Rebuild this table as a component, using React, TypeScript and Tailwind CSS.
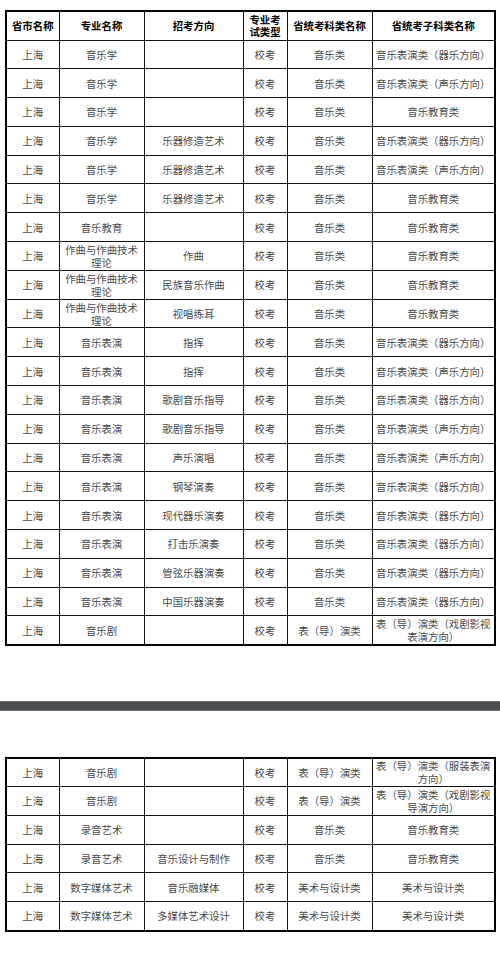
import React from 'react';

type Row = [string, string, string, string, string, string];

const head: Row = ['省市名称', '专业名称', '招考方向', '专业考试类型', '省统考科类名称', '省统考子科类名称'];

const page1: Row[] = [
  ['上海', '音乐学', '', '校考', '音乐类', '音乐表演类（器乐方向）'],
  ['上海', '音乐学', '', '校考', '音乐类', '音乐表演类（声乐方向）'],
  ['上海', '音乐学', '', '校考', '音乐类', '音乐教育类'],
  ['上海', '音乐学', '乐器修造艺术', '校考', '音乐类', '音乐表演类（器乐方向）'],
  ['上海', '音乐学', '乐器修造艺术', '校考', '音乐类', '音乐表演类（声乐方向）'],
  ['上海', '音乐学', '乐器修造艺术', '校考', '音乐类', '音乐教育类'],
  ['上海', '音乐教育', '', '校考', '音乐类', '音乐教育类'],
  ['上海', '作曲与作曲技术理论', '作曲', '校考', '音乐类', '音乐教育类'],
  ['上海', '作曲与作曲技术理论', '民族音乐作曲', '校考', '音乐类', '音乐教育类'],
  ['上海', '作曲与作曲技术理论', '视唱练耳', '校考', '音乐类', '音乐教育类'],
  ['上海', '音乐表演', '指挥', '校考', '音乐类', '音乐表演类（器乐方向）'],
  ['上海', '音乐表演', '指挥', '校考', '音乐类', '音乐表演类（声乐方向）'],
  ['上海', '音乐表演', '歌剧音乐指导', '校考', '音乐类', '音乐表演类（器乐方向）'],
  ['上海', '音乐表演', '歌剧音乐指导', '校考', '音乐类', '音乐表演类（声乐方向）'],
  ['上海', '音乐表演', '声乐演唱', '校考', '音乐类', '音乐表演类（声乐方向）'],
  ['上海', '音乐表演', '钢琴演奏', '校考', '音乐类', '音乐表演类（器乐方向）'],
  ['上海', '音乐表演', '现代器乐演奏', '校考', '音乐类', '音乐表演类（器乐方向）'],
  ['上海', '音乐表演', '打击乐演奏', '校考', '音乐类', '音乐表演类（器乐方向）'],
  ['上海', '音乐表演', '管弦乐器演奏', '校考', '音乐类', '音乐表演类（器乐方向）'],
  ['上海', '音乐表演', '中国乐器演奏', '校考', '音乐类', '音乐表演类（器乐方向）'],
  ['上海', '音乐剧', '', '校考', '表（导）演类', '表（导）演类（戏剧影视表演方向）'],
];

const page2: Row[] = [
  ['上海', '音乐剧', '', '校考', '表（导）演类', '表（导）演类（服装表演方向）'],
  ['上海', '音乐剧', '', '校考', '表（导）演类', '表（导）演类（戏剧影视导演方向）'],
  ['上海', '录音艺术', '', '校考', '音乐类', '音乐教育类'],
  ['上海', '录音艺术', '音乐设计与制作', '校考', '音乐类', '音乐教育类'],
  ['上海', '数字媒体艺术', '音乐融媒体', '校考', '美术与设计类', '美术与设计类'],
  ['上海', '数字媒体艺术', '多媒体艺术设计', '校考', '美术与设计类', '美术与设计类'],
];

const Cols = () => (
  <colgroup>
    <col className="w-[53px]" />
    <col className="w-[85px]" />
    <col className="w-[99px]" />
    <col className="w-[44px]" />
    <col className="w-[85px]" />
    <col className="w-[123px]" />
  </colgroup>
);

const Body = ({ rows }: { rows: Row[] }) => (
  <tbody>
    {rows.map((r, i) => (
      <tr key={i} className="h-[28.8px]">
        {r.map((c, j) => (
          <td
            key={j}
            className="border-[1.6px] border-[#111] px-[2px] py-0 text-center align-middle text-[10.4px] leading-[13px] text-[#4a4a4a]"
          >
            {c}
          </td>
        ))}
      </tr>
    ))}
  </tbody>
);

export default function App() {
  return (
    <div className="w-[500px] h-[964px] bg-white overflow-hidden font-['Noto_Sans_CJK_SC','Noto_Sans_CJK_JP',sans-serif]">
      <div className="pt-[10px] px-[5px]">
        <table className="w-[490px] table-fixed border-collapse border-2 border-black">
          <Cols />
          <thead>
            <tr className="h-[29px]">
              {head.map((h, i) => (
                <th
                  key={i}
                  className="border-[1.6px] border-[#111] px-[1px] py-0 text-center align-middle text-[10.4px] leading-[11.5px] font-bold text-black"
                >
                  {h}
                </th>
              ))}
            </tr>
          </thead>
          <Body rows={page1} />
        </table>
      </div>

      <div className="mt-[55px] h-[10px] bg-[#4b4e51] border-y border-[#707376]" />

      <div className="pt-[46px] px-[5px]">
        <table className="w-[490px] table-fixed border-collapse border-2 border-black">
          <Cols />
          <Body rows={page2} />
        </table>
      </div>
    </div>
  );
}
